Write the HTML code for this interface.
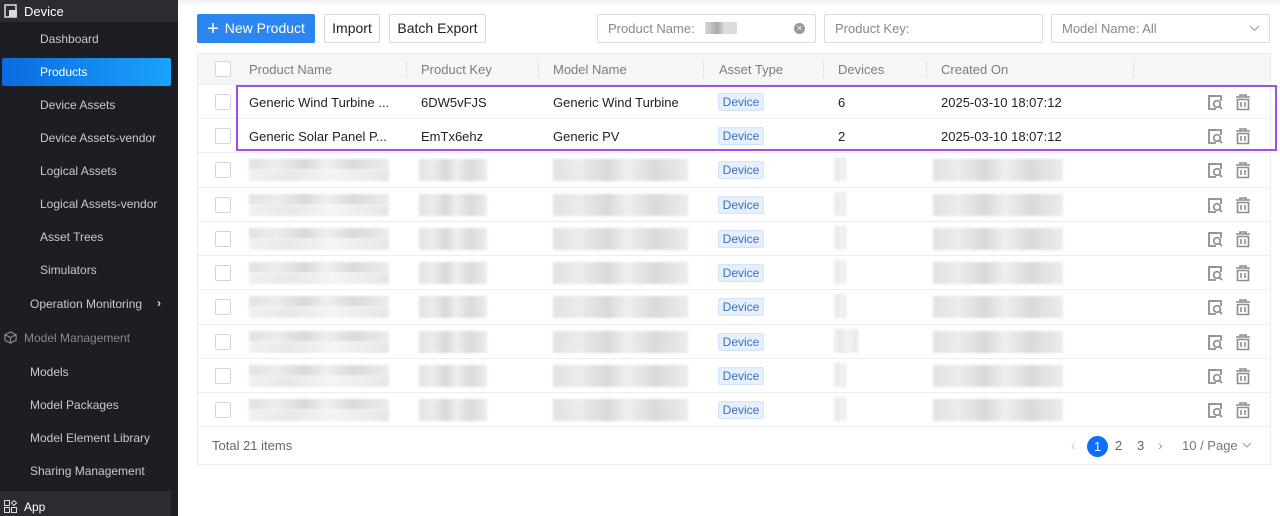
<!DOCTYPE html>
<html><head><meta charset="utf-8"><style>
*{box-sizing:border-box;margin:0;padding:0}
body{width:1280px;height:516px;overflow:hidden;font-family:"Liberation Sans",sans-serif;background:#fff;position:relative;font-size:13px;color:#222}
.sb{position:absolute;left:0;top:0;width:178px;height:516px;background:#1d1e23}
.sb div{position:absolute;color:#c8c9cc;font-size:12px}
.a{position:absolute}
.btn{position:absolute;top:14px;height:29px;border:1px solid #d9d9d9;border-radius:2px;background:#fff;font-size:14px;line-height:27px;text-align:center;color:#222}
.inp{position:absolute;top:14px;height:29px;border:1px solid #dcdcdc;border-radius:2px;font-size:13px;line-height:27px;padding-left:10px;color:#888}
.tbl{position:absolute;left:197px;top:53px;width:1074px;height:412px;border:1px solid #ececec}
.hd{position:absolute;left:0;top:0;width:1072px;height:30px;background:#f5f6f8}
.hd span{position:absolute;top:8px;color:#7a7d85;font-size:13px}
.sep{position:absolute;top:7px;width:1px;height:17px;background:#e2e3e6}
.row{position:absolute;left:0;width:1072px;height:34px;border-top:1px solid #eceef0}
.cb{position:absolute;left:17px;top:9px;width:16px;height:16px;border:1px solid #d3d5d8;border-radius:2px;background:#fff}
.row span{position:absolute;top:10px;font-size:13px;color:#222}
.tag{position:absolute;left:520px;top:8px;width:46px;height:18px;background:#e6f0fd;border:1px solid #d2e3fb;border-radius:2px;color:#3b6fc4;font-size:12px;line-height:16px;text-align:center}
.ic{position:absolute;top:9px}
.bl{position:absolute;filter:blur(1.2px)}
.b1{background:linear-gradient(90deg,#e2e2e2,#ececec 20%,#d8d8d8 40%,#efefef 55%,#dadada 75%,#ececec)}
.b2{background:linear-gradient(90deg,#f0f0f0,#e8e8e8 30%,#f4f4f4 60%,#e6e6e6)}
</style></head><body>
<div class="sb">
<div style="left:0;top:0;width:178px;height:22px;background:#2b2c31"></div>
<svg class="a" style="left:4px;top:4px" width="14" height="14" viewBox="0 0 14 14"><rect x="1" y="1" width="11" height="12" fill="none" stroke="#ddd" stroke-width="1.5"/><rect x="5" y="6" width="8" height="7" fill="#ddd"/></svg>
<div style="left:24px;top:4px;color:#fff;font-size:13px">Device</div>
<div style="left:40px;top:32px">Dashboard</div>
<div style="left:2px;top:58px;width:169px;height:28px;border-radius:2px;background:linear-gradient(90deg,#0b6ae0,#1aa3fb)"></div>
<div style="left:40px;top:65px;color:#fff">Products</div>
<div style="left:40px;top:98px">Device Assets</div>
<div style="left:40px;top:131px">Device Assets-vendor</div>
<div style="left:40px;top:164px">Logical Assets</div>
<div style="left:40px;top:197px">Logical Assets-vendor</div>
<div style="left:40px;top:230px">Asset Trees</div>
<div style="left:40px;top:263px">Simulators</div>
<div style="left:30px;top:297px">Operation Monitoring</div>
<div style="left:157px;top:296px;color:#ddd;font-weight:bold">›</div>
<svg class="a" style="left:4px;top:331px" width="13" height="13" viewBox="0 0 14 14"><path d="M7 1L13 4V10L7 13L1 10V4Z M1 4L7 7L13 4 M7 7V13" fill="none" stroke="#888" stroke-width="1.3"/></svg>
<div style="left:24px;top:331px;color:#888">Model Management</div>
<div style="left:30px;top:365px">Models</div>
<div style="left:30px;top:398px">Model Packages</div>
<div style="left:30px;top:431px">Model Element Library</div>
<div style="left:30px;top:464px">Sharing Management</div>
<div style="left:0;top:491px;width:171px;height:25px;background:#2b2c31"></div>
<svg class="a" style="left:4px;top:500px" width="13" height="13" viewBox="0 0 13 13"><rect x="0.5" y="0.5" width="5" height="5" fill="none" stroke="#ddd"/><rect x="0.5" y="7.5" width="5" height="5" fill="none" stroke="#ddd"/><rect x="7.5" y="7.5" width="5" height="5" fill="none" stroke="#ddd"/><path d="M10 0.5L12.5 3L10 5.5L7.5 3Z" fill="none" stroke="#ddd"/></svg>
<div style="left:24px;top:500px;color:#fff">App</div>
</div>
<div class="a" style="left:178px;top:0;width:1102px;height:6px;background:linear-gradient(#f0f0f0,#fff)"></div>

<div class="btn" style="left:197px;width:118px;background:#2b86f0;border-color:#2b86f0;color:#fff"><span style="font-size:20px;vertical-align:-2px;margin-right:6px">+</span>New Product</div>
<div class="btn" style="left:324px;width:56px">Import</div>
<div class="btn" style="left:389px;width:97px">Batch Export</div>
<div class="inp" style="left:597px;width:219px">Product Name:<span style="display:inline-block;width:32px;height:12px;margin-left:10px;vertical-align:-1px;background:linear-gradient(90deg,#d8d8d8,#aaa 40%,#ddd 60%)"></span><span style="position:absolute;left:196px;top:8px;width:11px;height:11px;border-radius:50%;background:#999;color:#fff;font-size:9px;line-height:11px;text-align:center">×</span></div>
<div class="inp" style="left:824px;width:219px">Product Key:</div>
<div class="inp" style="left:1051px;width:219px">Model Name: All<svg class="a" style="left:197px;top:10px" width="11" height="7" viewBox="0 0 11 7"><path d="M1 1L5.5 5.5L10 1" fill="none" stroke="#999"/></svg></div>

<div class="tbl">
<div class="hd">
<div class="cb" style="top:7px"></div>
<span style="left:51px">Product Name</span><div class="sep" style="left:208px"></div>
<span style="left:223px">Product Key</span><div class="sep" style="left:340px"></div>
<span style="left:355px">Model Name</span><div class="sep" style="left:505px"></div>
<span style="left:521px">Asset Type</span><div class="sep" style="left:625px"></div>
<span style="left:640px">Devices</span><div class="sep" style="left:728px"></div>
<span style="left:743px">Created On</span><div class="sep" style="left:935px"></div>
</div>
<div class="row" style="top:30px"><div class="cb"></div><span style="left:51px">Generic Wind Turbine ...</span><span style="left:223px">6DW5vFJS</span><span style="left:355px">Generic Wind Turbine</span><div class="tag">Device</div><span style="left:640px">6</span><span style="left:743px">2025-03-10 18:07:12</span>
<svg class="ic" style="left:1009px" width="17" height="17" viewBox="0 0 17 17"><path d="M9 2H2V15H9" fill="none" stroke="#8a8d94" stroke-width="1.8"/><path d="M2 2H14V7" fill="none" stroke="#8a8d94" stroke-width="1.8"/><circle cx="10" cy="10" r="3.3" fill="none" stroke="#8a8d94" stroke-width="1.7"/><path d="M12.5 12.5L15 15" stroke="#8a8d94" stroke-width="1.8"/></svg>
<svg class="ic" style="left:1037px" width="16" height="17" viewBox="0 0 16 17"><path d="M1 3H15M5 3V1H11V3M2.5 5.5H13.5V15.5H2.5Z M6 8V13M10 8V13" fill="none" stroke="#8a8d94" stroke-width="1.6"/></svg></div>
<div class="row" style="top:64px"><div class="cb"></div><span style="left:51px">Generic Solar Panel P...</span><span style="left:223px">EmTx6ehz</span><span style="left:355px">Generic PV</span><div class="tag">Device</div><span style="left:640px">2</span><span style="left:743px">2025-03-10 18:07:12</span>
<svg class="ic" style="left:1009px" width="17" height="17" viewBox="0 0 17 17"><path d="M9 2H2V15H9" fill="none" stroke="#8a8d94" stroke-width="1.8"/><path d="M2 2H14V7" fill="none" stroke="#8a8d94" stroke-width="1.8"/><circle cx="10" cy="10" r="3.3" fill="none" stroke="#8a8d94" stroke-width="1.7"/><path d="M12.5 12.5L15 15" stroke="#8a8d94" stroke-width="1.8"/></svg>
<svg class="ic" style="left:1037px" width="16" height="17" viewBox="0 0 16 17"><path d="M1 3H15M5 3V1H11V3M2.5 5.5H13.5V15.5H2.5Z M6 8V13M10 8V13" fill="none" stroke="#8a8d94" stroke-width="1.6"/></svg></div>

<div class="row" style="top:98px"><div class="cb"></div><div class="bl b1" style="left:51px;top:6px;width:140px;height:11px"></div><div class="bl b2" style="left:51px;top:17px;width:140px;height:11px"></div><div class="bl b1" style="left:221px;top:6px;width:68px;height:22px"></div><div class="bl b1" style="left:355px;top:6px;width:135px;height:22px"></div><div class="bl b2" style="left:636px;top:4px;width:12px;height:24px"></div><div class="bl b1" style="left:735px;top:6px;width:130px;height:22px"></div><div class="tag">Device</div>
<svg class="ic" style="left:1009px" width="17" height="17" viewBox="0 0 17 17"><path d="M9 2H2V15H9" fill="none" stroke="#8a8d94" stroke-width="1.8"/><path d="M2 2H14V7" fill="none" stroke="#8a8d94" stroke-width="1.8"/><circle cx="10" cy="10" r="3.3" fill="none" stroke="#8a8d94" stroke-width="1.7"/><path d="M12.5 12.5L15 15" stroke="#8a8d94" stroke-width="1.8"/></svg>
<svg class="ic" style="left:1037px" width="16" height="17" viewBox="0 0 16 17"><path d="M1 3H15M5 3V1H11V3M2.5 5.5H13.5V15.5H2.5Z M6 8V13M10 8V13" fill="none" stroke="#8a8d94" stroke-width="1.6"/></svg></div>
<div class="row" style="top:133px"><div class="cb"></div><div class="bl b1" style="left:51px;top:6px;width:140px;height:11px"></div><div class="bl b2" style="left:51px;top:17px;width:140px;height:11px"></div><div class="bl b1" style="left:221px;top:6px;width:68px;height:22px"></div><div class="bl b1" style="left:355px;top:6px;width:135px;height:22px"></div><div class="bl b2" style="left:636px;top:4px;width:12px;height:24px"></div><div class="bl b1" style="left:735px;top:6px;width:130px;height:22px"></div><div class="tag">Device</div>
<svg class="ic" style="left:1009px" width="17" height="17" viewBox="0 0 17 17"><path d="M9 2H2V15H9" fill="none" stroke="#8a8d94" stroke-width="1.8"/><path d="M2 2H14V7" fill="none" stroke="#8a8d94" stroke-width="1.8"/><circle cx="10" cy="10" r="3.3" fill="none" stroke="#8a8d94" stroke-width="1.7"/><path d="M12.5 12.5L15 15" stroke="#8a8d94" stroke-width="1.8"/></svg>
<svg class="ic" style="left:1037px" width="16" height="17" viewBox="0 0 16 17"><path d="M1 3H15M5 3V1H11V3M2.5 5.5H13.5V15.5H2.5Z M6 8V13M10 8V13" fill="none" stroke="#8a8d94" stroke-width="1.6"/></svg></div>
<div class="row" style="top:167px"><div class="cb"></div><div class="bl b1" style="left:51px;top:6px;width:140px;height:11px"></div><div class="bl b2" style="left:51px;top:17px;width:140px;height:11px"></div><div class="bl b1" style="left:221px;top:6px;width:68px;height:22px"></div><div class="bl b1" style="left:355px;top:6px;width:135px;height:22px"></div><div class="bl b2" style="left:636px;top:4px;width:12px;height:24px"></div><div class="bl b1" style="left:735px;top:6px;width:130px;height:22px"></div><div class="tag">Device</div>
<svg class="ic" style="left:1009px" width="17" height="17" viewBox="0 0 17 17"><path d="M9 2H2V15H9" fill="none" stroke="#8a8d94" stroke-width="1.8"/><path d="M2 2H14V7" fill="none" stroke="#8a8d94" stroke-width="1.8"/><circle cx="10" cy="10" r="3.3" fill="none" stroke="#8a8d94" stroke-width="1.7"/><path d="M12.5 12.5L15 15" stroke="#8a8d94" stroke-width="1.8"/></svg>
<svg class="ic" style="left:1037px" width="16" height="17" viewBox="0 0 16 17"><path d="M1 3H15M5 3V1H11V3M2.5 5.5H13.5V15.5H2.5Z M6 8V13M10 8V13" fill="none" stroke="#8a8d94" stroke-width="1.6"/></svg></div>
<div class="row" style="top:201px"><div class="cb"></div><div class="bl b1" style="left:51px;top:6px;width:140px;height:11px"></div><div class="bl b2" style="left:51px;top:17px;width:140px;height:11px"></div><div class="bl b1" style="left:221px;top:6px;width:68px;height:22px"></div><div class="bl b1" style="left:355px;top:6px;width:135px;height:22px"></div><div class="bl b2" style="left:636px;top:4px;width:12px;height:24px"></div><div class="bl b1" style="left:735px;top:6px;width:130px;height:22px"></div><div class="tag">Device</div>
<svg class="ic" style="left:1009px" width="17" height="17" viewBox="0 0 17 17"><path d="M9 2H2V15H9" fill="none" stroke="#8a8d94" stroke-width="1.8"/><path d="M2 2H14V7" fill="none" stroke="#8a8d94" stroke-width="1.8"/><circle cx="10" cy="10" r="3.3" fill="none" stroke="#8a8d94" stroke-width="1.7"/><path d="M12.5 12.5L15 15" stroke="#8a8d94" stroke-width="1.8"/></svg>
<svg class="ic" style="left:1037px" width="16" height="17" viewBox="0 0 16 17"><path d="M1 3H15M5 3V1H11V3M2.5 5.5H13.5V15.5H2.5Z M6 8V13M10 8V13" fill="none" stroke="#8a8d94" stroke-width="1.6"/></svg></div>
<div class="row" style="top:235px"><div class="cb"></div><div class="bl b1" style="left:51px;top:6px;width:140px;height:11px"></div><div class="bl b2" style="left:51px;top:17px;width:140px;height:11px"></div><div class="bl b1" style="left:221px;top:6px;width:68px;height:22px"></div><div class="bl b1" style="left:355px;top:6px;width:135px;height:22px"></div><div class="bl b2" style="left:636px;top:4px;width:12px;height:24px"></div><div class="bl b1" style="left:735px;top:6px;width:130px;height:22px"></div><div class="tag">Device</div>
<svg class="ic" style="left:1009px" width="17" height="17" viewBox="0 0 17 17"><path d="M9 2H2V15H9" fill="none" stroke="#8a8d94" stroke-width="1.8"/><path d="M2 2H14V7" fill="none" stroke="#8a8d94" stroke-width="1.8"/><circle cx="10" cy="10" r="3.3" fill="none" stroke="#8a8d94" stroke-width="1.7"/><path d="M12.5 12.5L15 15" stroke="#8a8d94" stroke-width="1.8"/></svg>
<svg class="ic" style="left:1037px" width="16" height="17" viewBox="0 0 16 17"><path d="M1 3H15M5 3V1H11V3M2.5 5.5H13.5V15.5H2.5Z M6 8V13M10 8V13" fill="none" stroke="#8a8d94" stroke-width="1.6"/></svg></div>
<div class="row" style="top:270px"><div class="cb"></div><div class="bl b1" style="left:51px;top:6px;width:140px;height:11px"></div><div class="bl b2" style="left:51px;top:17px;width:140px;height:11px"></div><div class="bl b1" style="left:221px;top:6px;width:68px;height:22px"></div><div class="bl b1" style="left:355px;top:6px;width:135px;height:22px"></div><div class="bl b2" style="left:636px;top:4px;width:24px;height:24px"></div><div class="bl b1" style="left:735px;top:6px;width:130px;height:22px"></div><div class="tag">Device</div>
<svg class="ic" style="left:1009px" width="17" height="17" viewBox="0 0 17 17"><path d="M9 2H2V15H9" fill="none" stroke="#8a8d94" stroke-width="1.8"/><path d="M2 2H14V7" fill="none" stroke="#8a8d94" stroke-width="1.8"/><circle cx="10" cy="10" r="3.3" fill="none" stroke="#8a8d94" stroke-width="1.7"/><path d="M12.5 12.5L15 15" stroke="#8a8d94" stroke-width="1.8"/></svg>
<svg class="ic" style="left:1037px" width="16" height="17" viewBox="0 0 16 17"><path d="M1 3H15M5 3V1H11V3M2.5 5.5H13.5V15.5H2.5Z M6 8V13M10 8V13" fill="none" stroke="#8a8d94" stroke-width="1.6"/></svg></div>
<div class="row" style="top:304px"><div class="cb"></div><div class="bl b1" style="left:51px;top:6px;width:140px;height:11px"></div><div class="bl b2" style="left:51px;top:17px;width:140px;height:11px"></div><div class="bl b1" style="left:221px;top:6px;width:68px;height:22px"></div><div class="bl b1" style="left:355px;top:6px;width:135px;height:22px"></div><div class="bl b2" style="left:636px;top:4px;width:12px;height:24px"></div><div class="bl b1" style="left:735px;top:6px;width:130px;height:22px"></div><div class="tag">Device</div>
<svg class="ic" style="left:1009px" width="17" height="17" viewBox="0 0 17 17"><path d="M9 2H2V15H9" fill="none" stroke="#8a8d94" stroke-width="1.8"/><path d="M2 2H14V7" fill="none" stroke="#8a8d94" stroke-width="1.8"/><circle cx="10" cy="10" r="3.3" fill="none" stroke="#8a8d94" stroke-width="1.7"/><path d="M12.5 12.5L15 15" stroke="#8a8d94" stroke-width="1.8"/></svg>
<svg class="ic" style="left:1037px" width="16" height="17" viewBox="0 0 16 17"><path d="M1 3H15M5 3V1H11V3M2.5 5.5H13.5V15.5H2.5Z M6 8V13M10 8V13" fill="none" stroke="#8a8d94" stroke-width="1.6"/></svg></div>
<div class="row" style="top:338px;height:35px;border-bottom:1px solid #eceef0"><div class="cb"></div><div class="bl b1" style="left:51px;top:6px;width:140px;height:11px"></div><div class="bl b2" style="left:51px;top:17px;width:140px;height:11px"></div><div class="bl b1" style="left:221px;top:6px;width:68px;height:22px"></div><div class="bl b1" style="left:355px;top:6px;width:135px;height:22px"></div><div class="bl b2" style="left:636px;top:4px;width:12px;height:24px"></div><div class="bl b1" style="left:735px;top:6px;width:130px;height:22px"></div><div class="tag">Device</div>
<svg class="ic" style="left:1009px" width="17" height="17" viewBox="0 0 17 17"><path d="M9 2H2V15H9" fill="none" stroke="#8a8d94" stroke-width="1.8"/><path d="M2 2H14V7" fill="none" stroke="#8a8d94" stroke-width="1.8"/><circle cx="10" cy="10" r="3.3" fill="none" stroke="#8a8d94" stroke-width="1.7"/><path d="M12.5 12.5L15 15" stroke="#8a8d94" stroke-width="1.8"/></svg>
<svg class="ic" style="left:1037px" width="16" height="17" viewBox="0 0 16 17"><path d="M1 3H15M5 3V1H11V3M2.5 5.5H13.5V15.5H2.5Z M6 8V13M10 8V13" fill="none" stroke="#8a8d94" stroke-width="1.6"/></svg></div>
<div class="a" style="left:14px;top:384px;color:#666;font-size:13px">Total 21 items</div>
<div class="a" style="left:873px;top:383px;color:#ccc;font-size:14px">‹</div>
<div class="a" style="left:889px;top:382px;width:21px;height:21px;border-radius:50%;background:#0d6efd;color:#fff;font-size:13px;line-height:21px;text-align:center">1</div>
<div class="a" style="left:917px;top:384px;color:#666">2</div>
<div class="a" style="left:939px;top:384px;color:#666">3</div>
<div class="a" style="left:960px;top:383px;color:#999;font-size:14px">›</div>
<div class="a" style="left:984px;top:384px;color:#777">10 / Page</div>
<svg class="a" style="left:1044px;top:388px" width="10" height="7" viewBox="0 0 10 7"><path d="M1 1L5 5L9 1" fill="none" stroke="#999"/></svg>
</div>
<div class="a" style="left:236px;top:85px;width:1041px;height:66px;border:2px solid #a24ee0"></div>
</body></html>
